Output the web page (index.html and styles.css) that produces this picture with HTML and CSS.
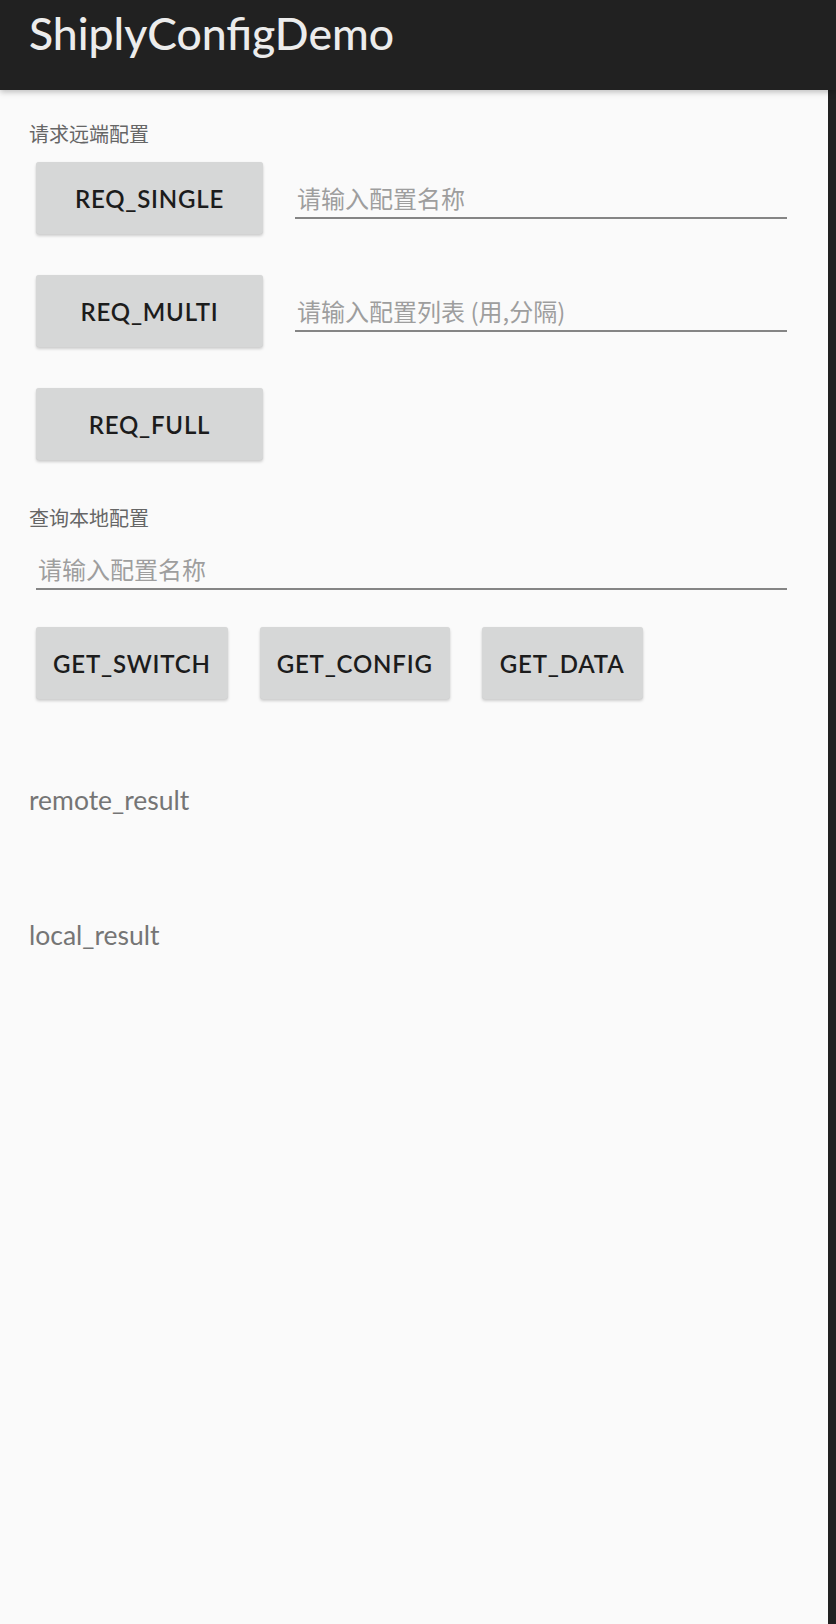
FILE: index.html
```html
<!DOCTYPE html>
<html lang="zh">
<head>
<meta charset="utf-8">
<title>ShiplyConfigDemo</title>
<link rel="stylesheet" href="styles.css">
</head>
<body>
<div class="screen">
  <header class="appbar"><h1 class="title">ShiplyConfigDemo</h1></header>
  <main class="content">
    <div class="section-label">请求远端配置</div>
    <div class="row row-first">
      <button class="btn btn-wide">REQ_SINGLE</button>
      <div class="field field-side"><span class="placeholder">请输入配置名称</span></div>
    </div>
    <div class="row">
      <button class="btn btn-wide">REQ_MULTI</button>
      <div class="field field-side"><span class="placeholder">请输入配置列表 (用,分隔)</span></div>
    </div>
    <div class="row">
      <button class="btn btn-wide">REQ_FULL</button>
    </div>
    <div class="section-label label-local">查询本地配置</div>
    <div class="field field-full"><span class="placeholder">请输入配置名称</span></div>
    <div class="row row-get">
      <button class="btn">GET_SWITCH</button>
      <button class="btn">GET_CONFIG</button>
      <button class="btn">GET_DATA</button>
    </div>
    <div class="result result-remote">remote_result</div>
    <div class="result result-local">local_result</div>
  </main>
</div>
</body>
</html>
```
FILE: styles.css
```css
html, body {
  margin: 0;
  padding: 0;
  background: #212121;
}
.screen {
  width: 836px;
  height: 1624px;
  display: flex;
  flex-direction: column;
  background: #212121;
  overflow: hidden;
}
.appbar {
  height: 90px;
  box-sizing: border-box;
  flex: none;
  display: flex;
  align-items: flex-start;
  padding: 6px 0 0 29px;
  background: #212121;
  position: relative;
  z-index: 2;
  box-shadow: 0 2px 6px rgba(0,0,0,0.25);
}
.title {
  margin: 0;
  font-family: Lato, "Noto Sans", sans-serif;
  font-weight: 500;
  font-size: 44.5px;
  line-height: 1.2;
  color: #ececec;
}
.content {
  flex: 1;
  width: 828px;
  background: #fafafa;
  padding-top: 31px;
  font-family: Lato, "Noto Sans CJK SC", sans-serif;
}
.section-label {
  margin-left: 29px;
  font-family: "Noto Sans CJK SC", sans-serif;
  font-size: 20px;
  line-height: 26px;
  color: #666666;
}
.row {
  display: flex;
  align-items: flex-start;
  margin-left: 36px;
  margin-top: 41px;
}
.row-first {
  margin-top: 15px;
}
.btn {
  height: 72px;
  min-width: 161px;
  padding: 0 17px;
  border: none;
  border-radius: 3px;
  background: #d6d7d7;
  box-shadow: 0 2px 3px rgba(0,0,0,0.18), 0 0 1px rgba(0,0,0,0.1);
  font-family: Lato, "Noto Sans", sans-serif;
  font-weight: 600;
  font-size: 24px;
  color: #1c1c1c;
  letter-spacing: 0.8px;
}
.btn-wide {
  width: 227px;
}
.field {
  border-bottom: 2px solid #858585;
  display: flex;
  align-items: flex-end;
}
.field-side {
  margin-left: 32px;
  width: 492px;
  height: 55px;
}
.placeholder {
  font-family: "Noto Sans CJK SC", sans-serif;
  font-size: 24px;
  line-height: 34px;
  color: #9e9e9e;
  padding-left: 2px;
  padding-bottom: 2px;
}
.label-local {
  margin-top: 45px;
}
.field-full {
  margin-top: 2px;
  margin-left: 36px;
  width: 751px;
  height: 55px;
}
.row-get {
  gap: 32px;
  margin-top: 37px;
}
.result {
  margin-left: 29px;
  font-family: Lato, "Noto Sans", sans-serif;
  font-size: 26.5px;
  line-height: 30px;
  color: #757575;
}
.result-remote {
  margin-top: 86px;
}
.result-local {
  margin-top: 105px;
}
```
